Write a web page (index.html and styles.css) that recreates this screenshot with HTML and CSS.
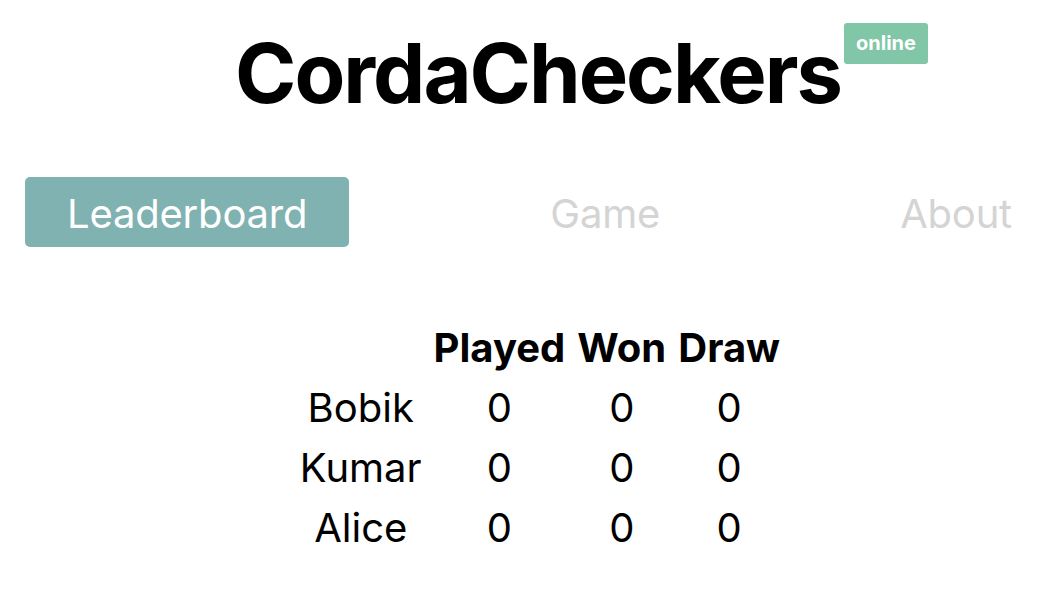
FILE: index.html
```html
<!DOCTYPE html>
<html lang="en">
<head>
    <meta charset="UTF-8">
    <meta name="viewport" content="width=device-width, initial-scale=1.0">
    <title>CordaCheckers</title>
    <link rel="stylesheet" href="styles.css">
</head>
<body>
    <header class="header">
        <h1 class="title">CordaCheckers<span class="status">online</span></h1>
    </header>

    <nav class="nav">
        <a class="nav-item active" href="#">Leaderboard</a>
        <a class="nav-item game" href="#">Game</a>
        <a class="nav-item" href="#">About</a>
    </nav>

    <div class="board">
        <table class="leaderboard">
            <thead>
                <tr>
                    <th></th>
                    <th>Played</th>
                    <th>Won</th>
                    <th>Draw</th>
                </tr>
            </thead>
            <tbody>
                <tr><td>Bobik</td><td>0</td><td>0</td><td>0</td></tr>
                <tr><td>Kumar</td><td>0</td><td>0</td><td>0</td></tr>
                <tr><td>Alice</td><td>0</td><td>0</td><td>0</td></tr>
            </tbody>
        </table>
    </div>
</body>
</html>
```

FILE: styles.css
```css
body {
    font-family: Inter, "Noto Sans", sans-serif;
    background-color: #fff;
    color: #000;
    margin: 0;
    padding: 0;
}

.header {
    display: flex;
    justify-content: center;
    padding: 18px 0 0 30px;
}

.title {
    position: relative;
    margin: 0;
    font-size: 83px;
    font-weight: 700;
    letter-spacing: -2px;
    line-height: 110px;
}

.status {
    position: absolute;
    top: 5px;
    right: -87px;
    background-color: #80c6a7;
    color: #fff;
    font-size: 20px;
    font-weight: 700;
    letter-spacing: 0;
    line-height: 41px;
    padding: 0 12px;
    border-radius: 3px;
}

.nav {
    display: flex;
    align-items: center;
    margin-top: 49px;
    padding: 0 34px 0 25px;
}

.nav-item {
    color: #d4d4d4;
    text-decoration: none;
    font-size: 40px;
    letter-spacing: -0.2px;
    line-height: 66px;
    padding-top: 4px;
}

.nav-item.active {
    background-color: #80b2b2;
    color: #fff;
    padding: 4px 42px 0;
    border-radius: 5px;
}

.nav-item.game {
    margin-left: 201px;
    margin-right: auto;
}

.board {
    display: flex;
    justify-content: center;
    margin-top: 70px;
    padding-left: 34px;
}

.leaderboard {
    border-collapse: collapse;
    font-size: 40px;
}

.leaderboard th,
.leaderboard td {
    text-align: center;
    padding: 0 6px;
    height: 60px;
}

.leaderboard th {
    font-weight: 700;
}
```
